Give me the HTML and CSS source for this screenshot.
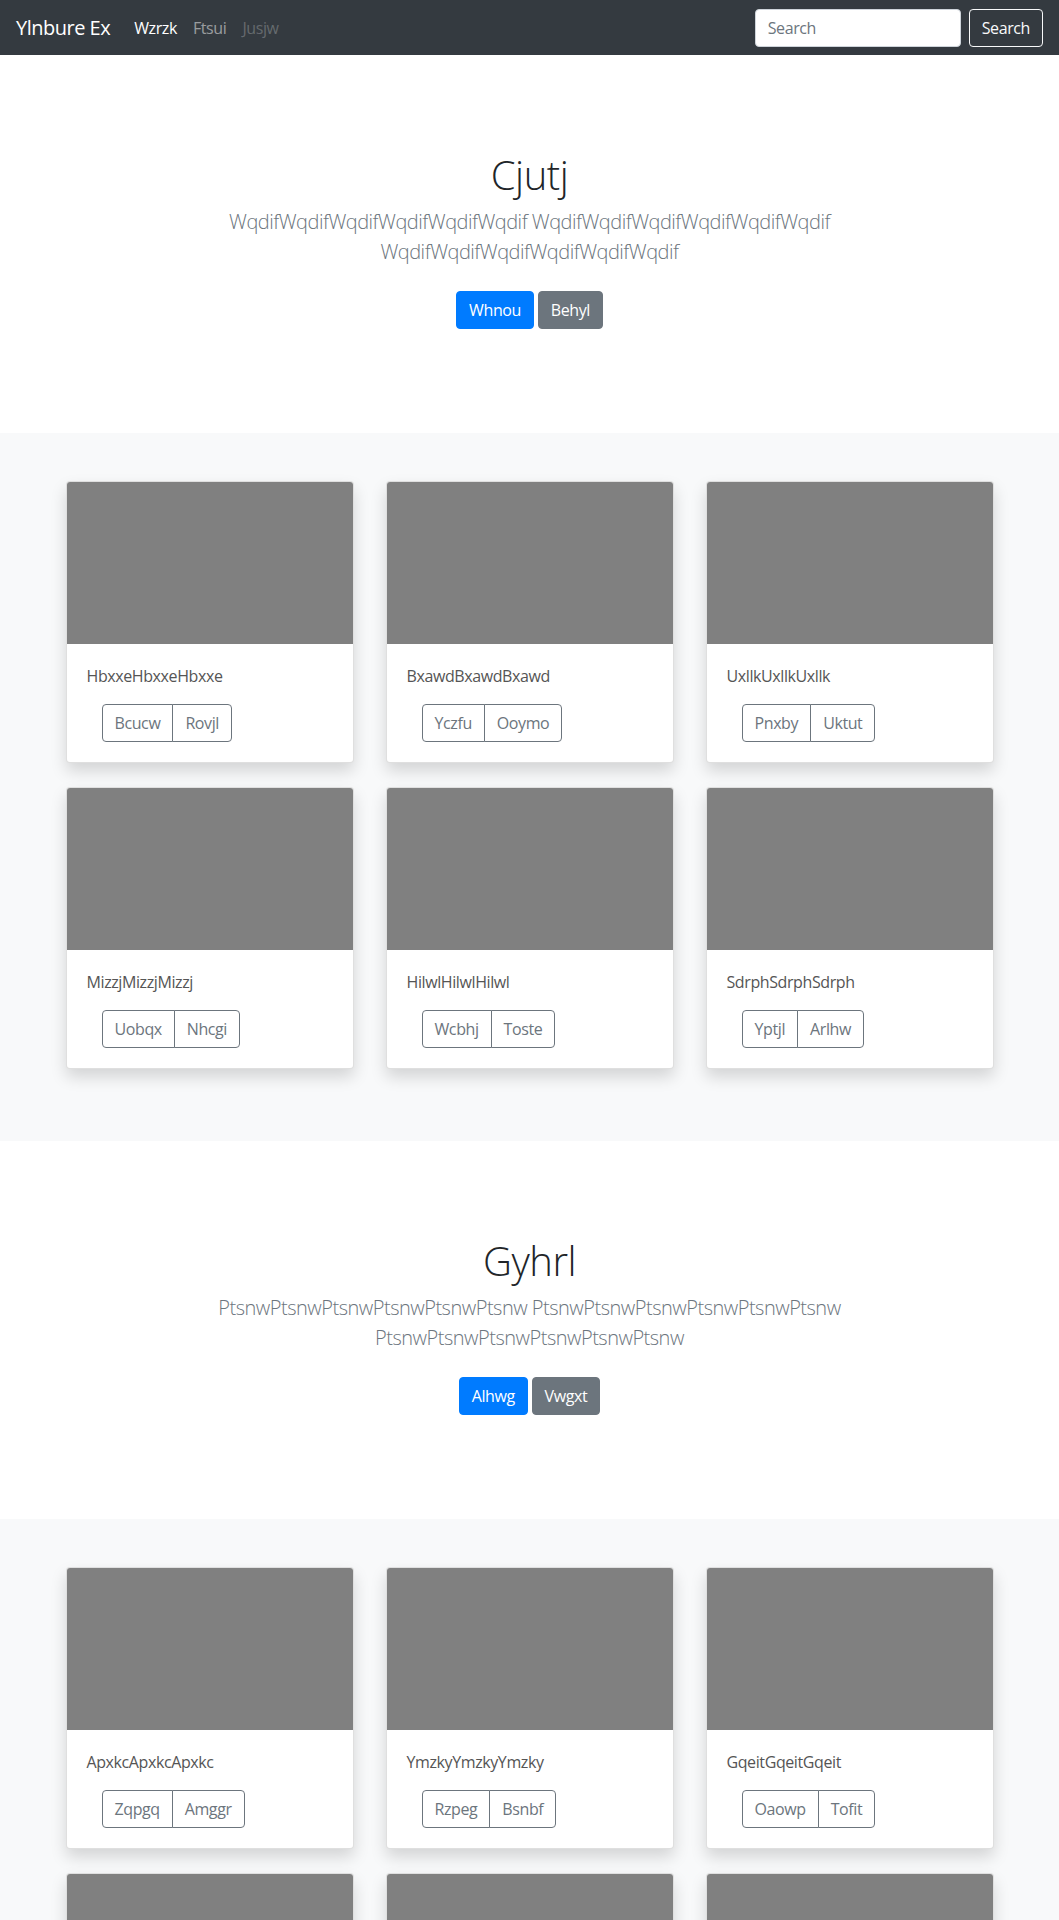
FILE: index.html
```html
<!DOCTYPE html>
<html lang="en">
<head>
<meta charset="utf-8">
<title>Ylnbure Ex</title>
<link rel="stylesheet" href="styles.css">
</head>
<body>
<header class="navbar">
  <a class="brand" href="#">Ylnbure Ex</a>
  <nav class="nav">
    <a class="nav-link active" href="#">Wzrzk</a>
    <a class="nav-link" href="#">Ftsui</a>
    <a class="nav-link disabled" href="#">Jusjw</a>
  </nav>
  <form class="search">
    <input class="search-input" type="search" placeholder="Search">
    <button class="btn btn-outline-light" type="button">Search</button>
  </form>
</header>

<main>
  <section class="hero">
    <h1 class="hero-title">Cjutj</h1>
    <p class="lead">WqdifWqdifWqdifWqdifWqdifWqdif WqdifWqdifWqdifWqdifWqdifWqdif WqdifWqdifWqdifWqdifWqdifWqdif</p>
    <p class="hero-actions">
      <a class="btn btn-primary" href="#">Whnou</a>
      <a class="btn btn-secondary" href="#">Behyl</a>
    </p>
  </section>

  <section class="album">
    <div class="grid">
      <div class="card"><div class="card-img"></div><div class="card-body"><p class="card-text">HbxxeHbxxeHbxxe</p><div class="btn-group"><button class="btn btn-outline-secondary">Bcucw</button><button class="btn btn-outline-secondary">Rovjl</button></div></div></div>
      <div class="card"><div class="card-img"></div><div class="card-body"><p class="card-text">BxawdBxawdBxawd</p><div class="btn-group"><button class="btn btn-outline-secondary">Yczfu</button><button class="btn btn-outline-secondary">Ooymo</button></div></div></div>
      <div class="card"><div class="card-img"></div><div class="card-body"><p class="card-text">UxllkUxllkUxllk</p><div class="btn-group"><button class="btn btn-outline-secondary">Pnxby</button><button class="btn btn-outline-secondary">Uktut</button></div></div></div>
      <div class="card"><div class="card-img"></div><div class="card-body"><p class="card-text">MizzjMizzjMizzj</p><div class="btn-group"><button class="btn btn-outline-secondary">Uobqx</button><button class="btn btn-outline-secondary">Nhcgi</button></div></div></div>
      <div class="card"><div class="card-img"></div><div class="card-body"><p class="card-text">HilwlHilwlHilwl</p><div class="btn-group"><button class="btn btn-outline-secondary">Wcbhj</button><button class="btn btn-outline-secondary">Toste</button></div></div></div>
      <div class="card"><div class="card-img"></div><div class="card-body"><p class="card-text">SdrphSdrphSdrph</p><div class="btn-group"><button class="btn btn-outline-secondary">Yptjl</button><button class="btn btn-outline-secondary">Arlhw</button></div></div></div>
    </div>
  </section>

  <section class="hero">
    <h1 class="hero-title">Gyhrl</h1>
    <p class="lead">PtsnwPtsnwPtsnwPtsnwPtsnwPtsnw PtsnwPtsnwPtsnwPtsnwPtsnwPtsnw PtsnwPtsnwPtsnwPtsnwPtsnwPtsnw</p>
    <p class="hero-actions">
      <a class="btn btn-primary" href="#">Alhwg</a>
      <a class="btn btn-secondary" href="#">Vwgxt</a>
    </p>
  </section>

  <section class="album">
    <div class="grid">
      <div class="card"><div class="card-img"></div><div class="card-body"><p class="card-text">ApxkcApxkcApxkc</p><div class="btn-group"><button class="btn btn-outline-secondary">Zqpgq</button><button class="btn btn-outline-secondary">Amggr</button></div></div></div>
      <div class="card"><div class="card-img"></div><div class="card-body"><p class="card-text">YmzkyYmzkyYmzky</p><div class="btn-group"><button class="btn btn-outline-secondary">Rzpeg</button><button class="btn btn-outline-secondary">Bsnbf</button></div></div></div>
      <div class="card"><div class="card-img"></div><div class="card-body"><p class="card-text">GqeitGqeitGqeit</p><div class="btn-group"><button class="btn btn-outline-secondary">Oaowp</button><button class="btn btn-outline-secondary">Tofit</button></div></div></div>
      <div class="card"><div class="card-img"></div><div class="card-body"><p class="card-text">KwmqzKwmqzKwmqz</p><div class="btn-group"><button class="btn btn-outline-secondary">Ivxqa</button><button class="btn btn-outline-secondary">Lpuee</button></div></div></div>
      <div class="card"><div class="card-img"></div><div class="card-body"><p class="card-text">FjlsoFjlsoFjlso</p><div class="btn-group"><button class="btn btn-outline-secondary">Nqerd</button><button class="btn btn-outline-secondary">Hwzic</button></div></div></div>
      <div class="card"><div class="card-img"></div><div class="card-body"><p class="card-text">RtbgaRtbgaRtbga</p><div class="btn-group"><button class="btn btn-outline-secondary">Cuyvo</button><button class="btn btn-outline-secondary">Emkpd</button></div></div></div>
    </div>
  </section>
</main>
</body>
</html>
```

FILE: styles.css
```css
* { box-sizing: border-box; }

html, body {
  margin: 0;
  padding: 0;
}

body {
  font-family: "Segoe UI", "Open Sans", "Noto Sans", sans-serif;
  font-size: 16px;
  line-height: 1.5;
  letter-spacing: -0.4px;
  color: #212529;
  background: #fff;
}

a { text-decoration: none; }

/* Navbar */
.navbar {
  display: flex;
  align-items: center;
  height: 55px;
  padding: 0 16px;
  background: #343a40;
}

.brand {
  font-size: 20px;
  line-height: 30px;
  letter-spacing: -0.5px;
  color: #fff;
  margin-right: 16px;
  padding: 5px 0;
}

.nav {
  display: flex;
}

.nav-link {
  padding: 8px;
  color: rgba(255, 255, 255, 0.5);
}

.nav-link.active { color: #fff; }
.nav-link.disabled { color: rgba(255, 255, 255, 0.25); }

.search {
  margin-left: auto;
  display: flex;
  align-items: center;
  gap: 8px;
}

.search-input {
  width: 206px;
  height: 38px;
  padding: 6px 12px;
  font-family: inherit;
  font-size: 16px;
  letter-spacing: inherit;
  color: #495057;
  background: #fff;
  border: 1px solid #ced4da;
  border-radius: 4px;
}

.search-input::placeholder { color: #6c757d; }

/* Buttons */
.btn {
  display: inline-block;
  font-family: inherit;
  font-size: 16px;
  line-height: 24px;
  letter-spacing: inherit;
  padding: 6px 12px;
  border: 1px solid transparent;
  border-radius: 4px;
  cursor: pointer;
  background: transparent;
  vertical-align: middle;
}

.btn-outline-light {
  color: #f8f9fa;
  border-color: #f8f9fa;
}

.btn-primary {
  color: #fff;
  background: #007bff;
  border-color: #007bff;
}

.btn-secondary {
  color: #fff;
  background: #6c757d;
  border-color: #6c757d;
}

.btn-outline-secondary {
  color: #6c757d;
  border-color: #6c757d;
  background: #fff;
}

/* Hero */
.hero {
  padding: 96px 16px;
  text-align: center;
}

.hero-title {
  margin: 0 0 8px;
  font-size: 40px;
  font-weight: 300;
  line-height: 1.2;
  letter-spacing: -0.5px;
  color: #212529;
}

.lead {
  max-width: 700px;
  margin: 0 auto 16px;
  font-size: 20px;
  font-weight: 300;
  line-height: 1.5;
  letter-spacing: -0.5px;
  color: #6c757d;
}

.hero-actions {
  margin: 0;
}

.hero-actions .btn {
  margin: 8px 0;
}

/* Album */
.album {
  background: #f8f9fa;
  padding: 48px 0;
}

.grid {
  width: 928px;
  margin: 0 auto;
  display: grid;
  grid-template-columns: repeat(3, 1fr);
  column-gap: 32px;
}

.card {
  background: #fff;
  border: 1px solid rgba(0, 0, 0, 0.125);
  border-radius: 4px;
  overflow: hidden;
  margin-bottom: 24px;
  box-shadow: 0 8px 16px rgba(0, 0, 0, 0.15);
}

.card-img {
  height: 162px;
  background: #808080;
}

.card-body {
  padding: 20px;
}

.card-text {
  margin: 0 0 16px;
  color: #555;
}

.btn-group {
  display: inline-flex;
  margin-left: 15px;
}

.btn-group .btn:first-child {
  border-top-right-radius: 0;
  border-bottom-right-radius: 0;
}

.btn-group .btn + .btn {
  margin-left: -1px;
  border-top-left-radius: 0;
  border-bottom-left-radius: 0;
}
```
